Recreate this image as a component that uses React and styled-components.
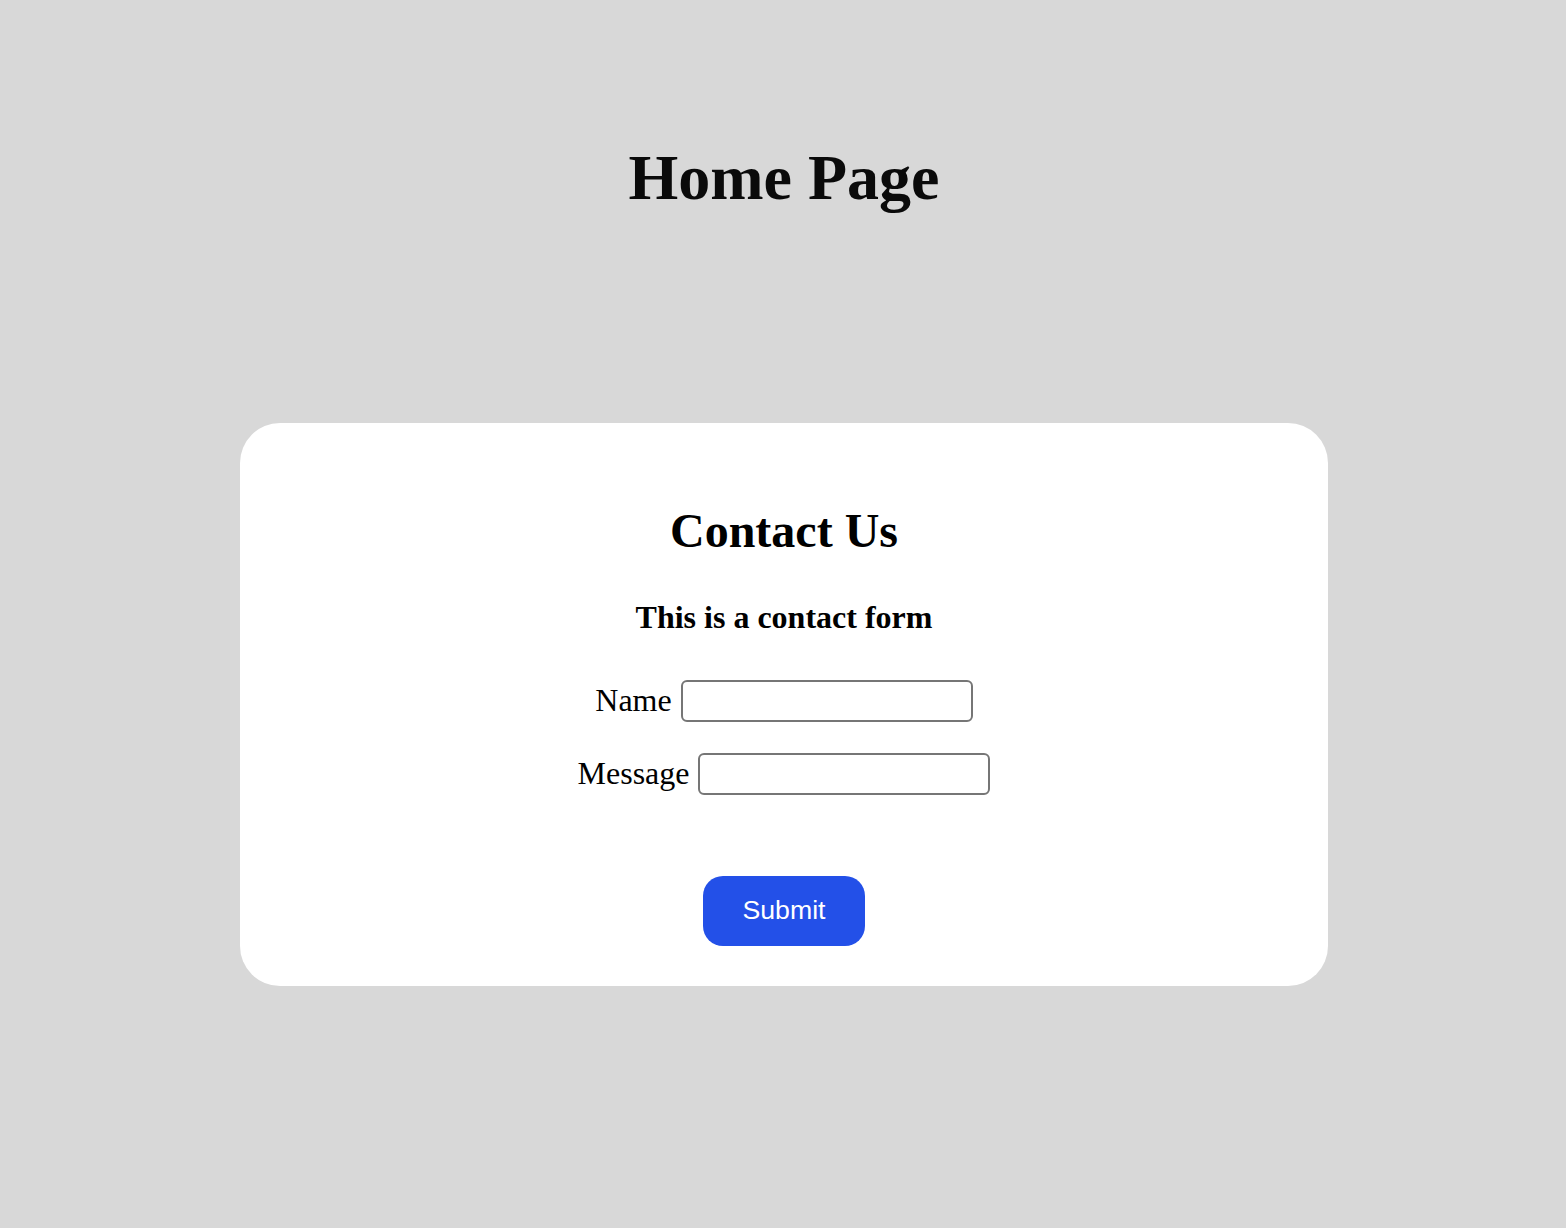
import React from "react";
import styled, { createGlobalStyle } from "styled-components";

const GlobalStyle = createGlobalStyle`
  html, body {
    margin: 0;
    padding: 0;
    background: #d8d8d8;
  }
  body {
    font-family: "Liberation Serif", "Times New Roman", serif;
    color: #000;
  }
`;

const Page = styled.div`
  min-height: 100vh;
  box-sizing: border-box;
  padding: 141px 0 0 2px;
  display: flex;
  flex-direction: column;
  align-items: center;
`;

const Title = styled.h1`
  margin: 0 0 208px;
  font-size: 64px;
  line-height: 1.15;
  font-weight: 700;
  color: #0a0a0a;
`;

const Card = styled.div`
  width: 1088px;
  box-sizing: border-box;
  padding: 80px 0 40px;
  background: #fff;
  border-radius: 40px;
  display: flex;
  flex-direction: column;
  align-items: center;
`;

const CardTitle = styled.h2`
  margin: 0 0 41px;
  font-size: 48px;
  line-height: 1.15;
  font-weight: 700;
`;

const Subtitle = styled.h3`
  margin: 0;
  font-size: 32px;
  line-height: 1.15;
  font-weight: 700;
`;

const Form = styled.form`
  margin-top: 44px;
  display: flex;
  flex-direction: column;
  align-items: center;
  gap: 31px;
`;

const Row = styled.div`
  display: flex;
  align-items: center;
  gap: 9px;
`;

const Label = styled.label`
  font-size: 32px;
  line-height: 1.15;
`;

const Input = styled.input`
  width: 292px;
  height: 42px;
  box-sizing: border-box;
  border: 2px solid #767676;
  border-radius: 6px;
  background: #fff;
  padding: 0 6px;
  font-size: 26px;
  font-family: "Liberation Sans", Arial, sans-serif;
  outline: none;
`;

const Button = styled.button`
  margin-top: 50px;
  width: 162px;
  height: 70px;
  border: none;
  border-radius: 20px;
  background: #2350e8;
  color: #fff;
  font-family: "Liberation Sans", Arial, sans-serif;
  font-size: 26.7px;
  cursor: pointer;
`;

export default function App() {
  return (
    <>
      <GlobalStyle />
      <Page>
        <Title>Home Page</Title>
        <Card>
          <CardTitle>Contact Us</CardTitle>
          <Subtitle>This is a contact form</Subtitle>
          <Form onSubmit={(e) => e.preventDefault()}>
            <Row>
              <Label htmlFor="name">Name</Label>
              <Input id="name" type="text" />
            </Row>
            <Row>
              <Label htmlFor="message">Message</Label>
              <Input id="message" type="text" />
            </Row>
            <Button type="submit">Submit</Button>
          </Form>
        </Card>
      </Page>
    </>
  );
}
